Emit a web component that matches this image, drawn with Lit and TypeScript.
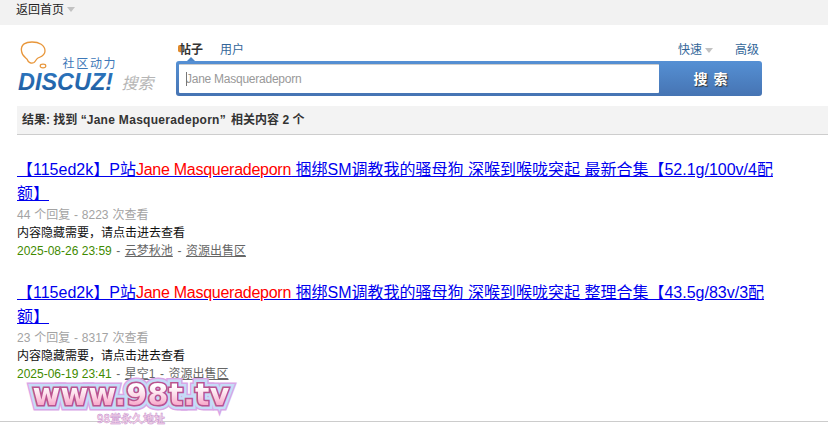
import { LitElement, html, css } from "lit";
import { customElement } from "lit/decorators.js";

const FONT = css`Tahoma, "Liberation Sans", "Noto Sans CJK SC", sans-serif`;
const Q = "Jane Masqueradeporn";
const results = [
  { pre: "【115ed2k】P站", post: " 捆绑SM调教我的骚母狗 深喉到喉咙突起 最新合集【52.1g/100v/4配额】", stat: "44 个回复 - 8223 次查看", date: "2025-08-26 23:59", user: "云梦秋池" },
  { pre: "【115ed2k】P站", post: " 捆绑SM调教我的骚母狗 深喉到喉咙突起 整理合集【43.5g/83v/3配额】", stat: "23 个回复 - 8317 次查看", date: "2025-06-19 23:41", user: "星空1" },
];

@customElement("app-root")
export class AppRoot extends LitElement {
  static styles = css`
    :host { display: block; position: relative; width: 828px; height: 434px; overflow: hidden; background: #fff; font: 12px/18px ${FONT}; color: #444; }
    a { color: inherit; }
    .top { height: 25px; background: #f2f2f2; display: flex; align-items: center; padding: 0 0 6px 16px; box-sizing: border-box; color: #222; gap: 3px; }
    .caret { width: 0; height: 0; border: 4px solid transparent; border-top: 5px solid #c2c2c2; border-bottom: 0; display: inline-block; }
    .head { display: flex; padding: 14px 66px 0 17px; height: 82px; box-sizing: border-box; }
    .logo { width: 159px; flex: none; }
    .logo svg { display: block; }
    .search { flex: 1; }
    .tabs { display: flex; height: 22px; align-items: center; color: #336699; gap: 17px; padding: 0 3px; }
    .tabs b { color: #333; position: relative; }
    .tabs b::before { content: ""; position: absolute; left: -1px; top: 4px; width: 3px; height: 7px; background: #e08a2c; border-radius: 2px; }
    .tabs b::after { content: ""; position: absolute; left: 8px; top: 16px; border: 4px solid transparent; border-bottom: 4px solid #4d85c6; border-top: 0; }
    .spacer { flex: 1; }
    .quick { display: flex; align-items: center; gap: 3px; margin-right: 1px; }
    .adv { margin-left: 4px; }
    .box { display: flex; height: 35px; background: linear-gradient(#5590d4, #4674b3); border-radius: 3px; box-sizing: border-box; padding: 3px 0 3px 3px; }
    .input { width: 480px; background: #fff; color: #999; font-size: 12px; line-height: 29px; padding-left: 7px; box-sizing: border-box; height: 29px; border-top: 1px solid #ccc; border-radius: 1px; white-space: nowrap; letter-spacing: -.25px; position: relative; }
    .input::before { content: ""; position: absolute; left: 7px; top: 7px; width: 1px; height: 14px; background: #777; }
    .btn { flex: 1; display: flex; align-items: center; justify-content: center; color: #fff; font-size: 14px; font-weight: bold; gap: 6px; text-shadow: 1px 1px 1px #333; }
    .bar { margin-left: 17px; height: 29px; background: #f3f3f3; border-bottom: 1px solid #cdcdcd; box-sizing: border-box; padding-left: 5px; line-height: 28px; color: #333; font-weight: bold; margin-top: -1px; }
    .bar span { letter-spacing: .3px; }
    .bar i { font-style: normal; margin-left: 2px; }
    .list { padding: 23px 40px 0 17px; }
    .item { margin-bottom: 21px; }
    .title { font-size: 16px; line-height: 24px; color: #0000ee; text-decoration: underline; }
    .title em { font-style: normal; color: #f00; letter-spacing: -.26px; }
    .stat { color: #a3a3a3; word-spacing: .5px; }
    .body { color: #111; line-height: 18px; }
    .meta { color: #666; word-spacing: 1.2px; }
    .date { color: #3f8a00; word-spacing: 0; }
    .rule { position: absolute; left: 0; right: 0; top: 421px; height: 1px; background: #ccc; }
    .wm { position: absolute; left: 24px; top: 377px; text-align: center; width: 214px; z-index: 2; }
    .url { position: relative; font: 900 30px/36px "DejaVu Sans", sans-serif; white-space: nowrap; color: #d9a6e6; -webkit-text-stroke: 11px #d9a6e6; letter-spacing: .3px; }
    .url::before, .url b, .url b::after { position: absolute; left: 0; right: 0; top: 0; font-weight: 900; }
    .url::before { content: "www.98t.tv"; color: #c5dcf7; -webkit-text-stroke: 8px #c5dcf7; }
    .url b { color: #ba5390; -webkit-text-stroke: 3px #ba5390; }
    .url b::after { content: "www.98t.tv"; -webkit-text-stroke: 0; color: transparent; background: linear-gradient(#fff 25%, #fcdce9 50%, #f79cc3 85%); -webkit-background-clip: text; background-clip: text; }
    .sub { font: bold 11px/12px "Noto Sans CJK SC", sans-serif; color: #f8d6e8; margin-top: -1px; -webkit-text-stroke: .4px #bd86cc; }
  `;

  render() {
    return html`
      <div class="top"><span>返回首页</span><i class="caret"></i></div>
      <div class="head">
        <div class="logo">
          <svg width="159" height="60" viewBox="0 0 159 60">
            <defs><linearGradient id="g" x1="0" y1="0" x2="0" y2="1"><stop offset="0" stop-color="#2f79c2"/><stop offset="1" stop-color="#1d5a9e"/></linearGradient></defs>
            <path d="M4.500 12 C3.500 5 9 3 15 3 C22 3 28 6 28 12 C28 17 23 18 21 19 C19 20 19 22 17 23.500 C14 25 11 23 10.500 21 C10 19 5 18 4.500 12 Z" fill="none" stroke="#e8963a" stroke-width="1.300"/>
            <ellipse cx="26" cy="27" rx="2.800" ry="1.800" fill="none" stroke="#e8963a" stroke-width="1.200"/>
            <text x="45.500" y="29" font-size="12" fill="#3d78b8" letter-spacing="1.700" font-family="'Noto Sans CJK SC', sans-serif">社区动力</text>
            <text x="1" y="51" font-size="24" font-weight="bold" font-style="italic" fill="url(#g)" textLength="95" lengthAdjust="spacingAndGlyphs" font-family="'Liberation Sans', sans-serif">DISCUZ!</text>
            <text x="104.500" y="50" font-size="16" font-style="italic" fill="#b5b5b5" font-family="'Noto Sans CJK SC', sans-serif">搜索</text>
          </svg>
        </div>
        <div class="search">
          <div class="tabs"><b>帖子</b><span>用户</span><span class="spacer"></span><span class="quick">快速<i class="caret"></i></span><span class="adv">高级</span></div>
          <div class="box"><div class="input">${Q}</div><div class="btn"><span>搜</span><span>索</span></div></div>
        </div>
      </div>
      <div class="bar">结果: 找到 “<span>${Q}</span>” <i>相关内容 2 个</i></div>
      <div class="list">
        ${results.map(r => html`<div class="item">
          <div class="title">${r.pre}<em>${Q}</em>${r.post}</div>
          <div class="stat">${r.stat}</div>
          <div class="body">内容隐藏需要，请点击进去查看</div>
          <div class="meta"><span class="date">${r.date}</span> - <a href="#">${r.user}</a> - <a href="#">资源出售区</a></div>
        </div>`)}
      </div>
      <div class="rule"></div>
      <div class="wm"><div class="url">www.98t.tv<b>www.98t.tv</b></div><div class="sub">98堂永久地址</div></div>
    `;
  }
}
